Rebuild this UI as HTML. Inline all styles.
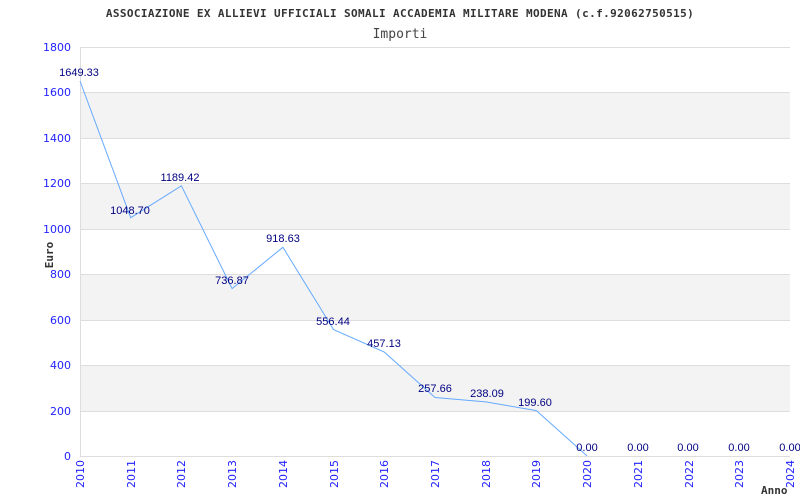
<!DOCTYPE html>
<html><head><style>body{margin:0;background:#fff}svg{display:block}</style></head><body>
<svg width="800" height="500" xmlns="http://www.w3.org/2000/svg">
<rect width="800" height="500" fill="#fff"/>
<text x="400" y="17" text-anchor="middle" font-family="DejaVu Sans Mono, Liberation Mono, monospace" font-weight="bold" font-size="11" letter-spacing="0.38" fill="#333">ASSOCIAZIONE EX ALLIEVI UFFICIALI SOMALI ACCADEMIA MILITARE MODENA (c.f.92062750515)</text>
<text x="400" y="38" text-anchor="middle" font-family="DejaVu Sans Mono, monospace" font-size="13" fill="#444">Importi</text>
<g fill="#f3f3f3"><rect x="80" y="92" width="710" height="46"/><rect x="80" y="183" width="710" height="46"/><rect x="80" y="274" width="710" height="46"/><rect x="80" y="365" width="710" height="46"/></g>
<g stroke="#ddd" stroke-width="1"><line x1="80" y1="47.5" x2="790" y2="47.5"/><line x1="80" y1="92.5" x2="790" y2="92.5"/><line x1="80" y1="138.5" x2="790" y2="138.5"/><line x1="80" y1="183.5" x2="790" y2="183.5"/><line x1="80" y1="229.5" x2="790" y2="229.5"/><line x1="80" y1="274.5" x2="790" y2="274.5"/><line x1="80" y1="320.5" x2="790" y2="320.5"/><line x1="80" y1="365.5" x2="790" y2="365.5"/><line x1="80" y1="411.5" x2="790" y2="411.5"/><line x1="80" y1="456.5" x2="790" y2="456.5"/><line x1="80.5" y1="47" x2="80.5" y2="457"/></g>
<g font-family="DejaVu Sans, sans-serif" font-size="11" fill="#22f" text-anchor="end">
<text x="71" y="51">1800</text><text x="71" y="96">1600</text><text x="71" y="142">1400</text><text x="71" y="187">1200</text><text x="71" y="233">1000</text><text x="71" y="278">800</text><text x="71" y="324">600</text><text x="71" y="369">400</text><text x="71" y="415">200</text><text x="71" y="460">0</text>
</g>
<g font-family="DejaVu Sans, sans-serif" font-size="11" fill="#22f" text-anchor="end">
<text transform="translate(84,460) rotate(-90)">2010</text><text transform="translate(135,460) rotate(-90)">2011</text><text transform="translate(185,460) rotate(-90)">2012</text><text transform="translate(236,460) rotate(-90)">2013</text><text transform="translate(287,460) rotate(-90)">2014</text><text transform="translate(338,460) rotate(-90)">2015</text><text transform="translate(388,460) rotate(-90)">2016</text><text transform="translate(439,460) rotate(-90)">2017</text><text transform="translate(490,460) rotate(-90)">2018</text><text transform="translate(540,460) rotate(-90)">2019</text><text transform="translate(591,460) rotate(-90)">2020</text><text transform="translate(642,460) rotate(-90)">2021</text><text transform="translate(693,460) rotate(-90)">2022</text><text transform="translate(743,460) rotate(-90)">2023</text><text transform="translate(794,460) rotate(-90)">2024</text>
</g>
<text transform="translate(53,255) rotate(-90)" text-anchor="middle" font-family="DejaVu Sans Mono, monospace" font-weight="bold" font-size="11" fill="#333">Euro</text>
<text x="761" y="494" font-family="DejaVu Sans Mono, monospace" font-weight="bold" font-size="11" fill="#333">Anno</text>
<polyline fill="none" stroke="#6af" stroke-width="1" points="80,81 130.7,217.7 181.4,185.8 232.1,288.6 282.9,247.3 333.6,329.6 384.3,352.1 435,397.5 485.7,401.9 536.4,410.6 587.1,456"/>
<g font-family="Liberation Sans, sans-serif" font-size="11" fill="#000080" text-anchor="middle">
<text x="79" y="76">1649.33</text><text x="130" y="214">1048.70</text><text x="180" y="181">1189.42</text><text x="232" y="284">736.87</text><text x="283" y="242">918.63</text><text x="333" y="325">556.44</text><text x="384" y="347">457.13</text><text x="435" y="392">257.66</text><text x="487" y="397">238.09</text><text x="535" y="406">199.60</text><text x="587" y="451">0.00</text><text x="638" y="451">0.00</text><text x="688" y="451">0.00</text><text x="739" y="451">0.00</text><text x="790" y="451">0.00</text>
</g>
</svg>
</body></html>
